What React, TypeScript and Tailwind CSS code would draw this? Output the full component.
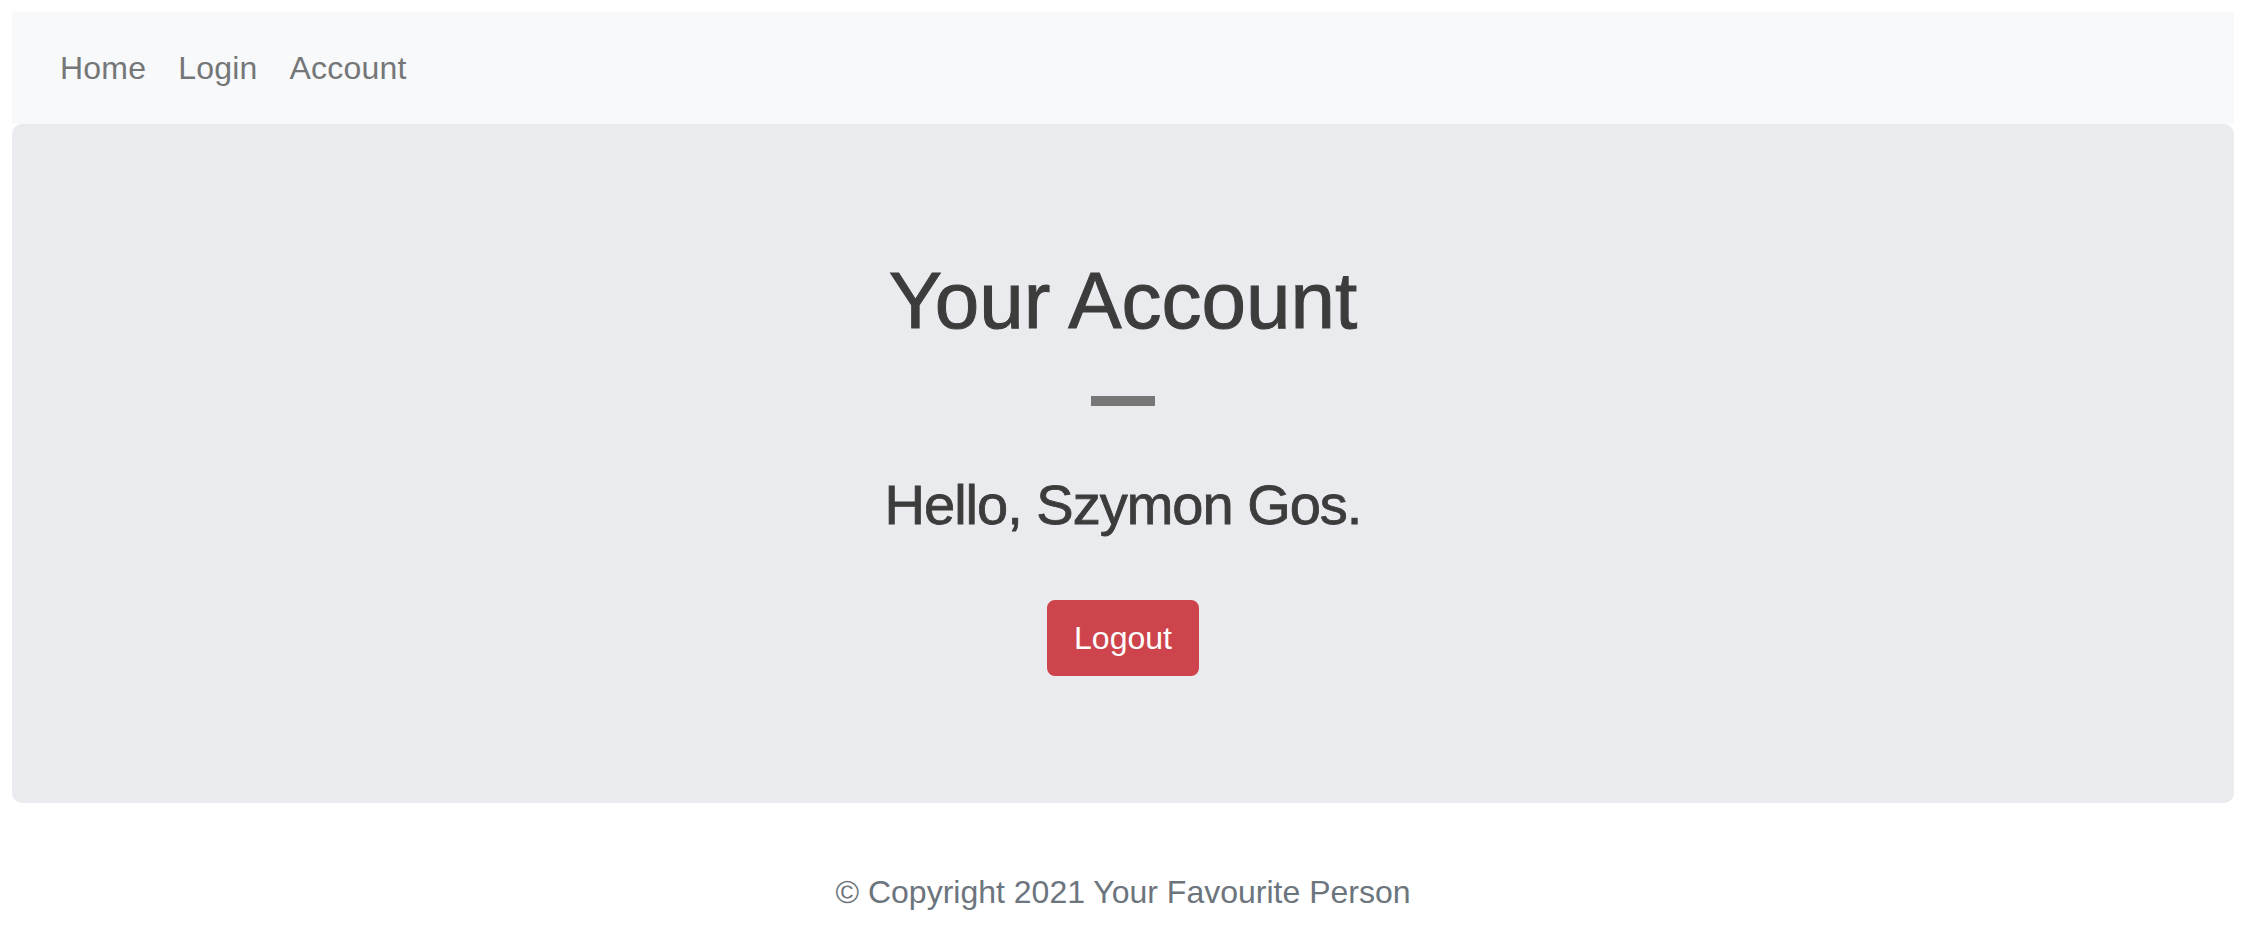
const navLinks = ["Home", "Login", "Account"];

const App: React.FC = () => {
  return (
    <div className="min-h-screen bg-white font-['Liberation_Sans',Arial,sans-serif]">
      <div className="px-3 pt-3">
        <nav className="flex h-[112px] items-center bg-[#f8f9fa] pl-[32px]">
          {navLinks.map((link) => (
            <a
              key={link}
              href="#"
              className="px-4 text-[32px] leading-[48px] tracking-[0.2px] text-[#757677]"
            >
              {link}
            </a>
          ))}
        </nav>

        <div className="flex flex-col items-center rounded-[10px] bg-[#e9ebef] pt-[129px] pb-[127px]">
          <h1 className="text-[80px] leading-[96px] text-[#3c3c3c] [-webkit-text-stroke:1px_#3c3c3c]">
            Your Account
          </h1>
          <div className="mt-[47px] h-[10px] w-[64px] bg-[#777777]" />
          <h2 className="mt-[65px] text-[56px] leading-[67px] tracking-[-1px] text-[#3c3c3c] [-webkit-text-stroke:0.8px_#3c3c3c]">
            Hello, Szymon Gos.
          </h2>
          <button className="mt-[62px] h-[76px] w-[152px] rounded-[8px] border-2 border-[#cd444c] bg-[#cd444c] text-[32px] leading-[48px] text-white">
            Logout
          </button>
        </div>
      </div>

      <footer className="mt-[65px] text-center text-[32px] leading-[48px] text-[#6c757d]">
        © Copyright 2021 Your Favourite Person
      </footer>
    </div>
  );
};

export default App;
